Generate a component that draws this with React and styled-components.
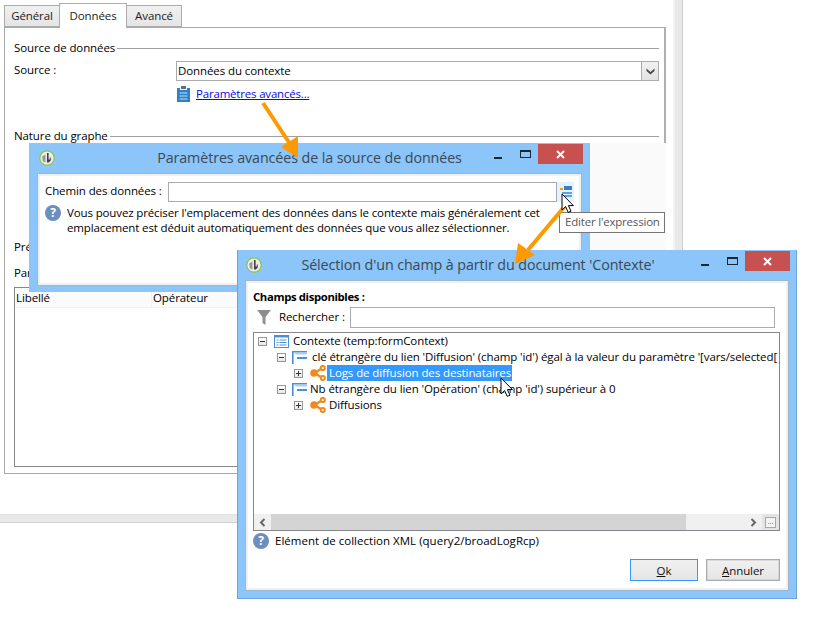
import styled, { createGlobalStyle } from "styled-components";

const FONT = `"Open Sans", "Noto Sans", "Liberation Sans", sans-serif`;

const GlobalStyle = createGlobalStyle`
  html, body {
    margin: 0;
    padding: 0;
    background: #fff;
  }
  body {
    font-family: ${FONT};
    font-size: 11.5px;
    letter-spacing: -0.1px;
    color: #000;
  }
  * { box-sizing: border-box; }
  svg { flex: none; }
`;

const Page = styled.div`
  position: relative;
  width: 823px;
  height: 626px;
  overflow: hidden;
  display: flex;
  align-items: flex-start;
`;

const Editor = styled.div`
  width: 673px;
  display: flex;
  flex-direction: column;
`;

const Tabs = styled.div`
  display: flex;
  align-items: flex-end;
  height: 28px;
  padding: 3px 0 0 4px;
  margin-bottom: -1px;
  position: relative;
  z-index: 1;
`;

const Tab = styled.div`
  width: ${(p) => p.$w}px;
  height: ${(p) => (p.$active ? 25 : 22)}px;
  margin-bottom: ${(p) => (p.$active ? 0 : 1)}px;
  margin-left: ${(p) => (p.$first ? 0 : -1)}px;
  padding-bottom: 2px;
  display: flex;
  align-items: center;
  justify-content: center;
  border: 1px solid #acacac;
  border-bottom: ${(p) => (p.$active ? "none" : "1px solid #acacac")};
  background: ${(p) => (p.$active ? "#fff" : "linear-gradient(#f0f0f0, #e5e5e5)")};
  color: #222;
`;

const Panel = styled.div`
  width: 662px;
  height: 447px;
  margin-left: 4px;
  padding: 12px 5px 0 9px;
  border: 1px solid #a8a8a8;
  border-right: 2px solid #b0b0b0;
  display: flex;
  flex-direction: column;
`;

const Heading = styled.div`
  height: 16px;
  padding-bottom: 2px;
  margin-top: ${(p) => p.$top || 0}px;
  display: flex;
  align-items: center;
  gap: 2px;
  white-space: nowrap;
  &::after {
    content: "";
    flex: 1;
    height: 1px;
    margin-top: 2px;
    background: #a0a0a0;
  }
`;

const SourceRow = styled.div`
  display: flex;
  align-items: center;
  height: 20px;
  margin-top: 5px;
`;

const FieldLabel = styled.div`
  width: ${(p) => p.$w}px;
  flex: none;
  white-space: nowrap;
  margin-bottom: ${(p) => p.$lift * 2}px;
`;

const SelectBox = styled.div`
  flex: 1;
  height: 20px;
  display: flex;
  align-items: center;
  justify-content: space-between;
  border: 1px solid #acacac;
  padding-left: 1px;
`;

const SelectText = styled.span`
  margin-bottom: 2px;
`;

const SelectArrow = styled.div`
  width: 17px;
  height: 18px;
  display: flex;
  align-items: center;
  justify-content: center;
  border-left: 1px solid #acacac;
  background: linear-gradient(#f0f0f0, #e3e3e3);
`;

const LinkRow = styled.div`
  height: 16px;
  margin: 5px 0 0 163px;
  display: flex;
  align-items: center;
  gap: 6px;
`;

const Link = styled.a`
  color: #0a0ae0;
  text-decoration: underline;
  letter-spacing: -0.19px;
  margin-bottom: 2px;
`;

const HiddenLabel = styled.div`
  height: 16px;
  margin-top: ${(p) => p.$top}px;
  line-height: 16px;
`;

const GridBox = styled.div`
  height: 180px;
  margin-top: 6px;
  border: 1px solid #85878c;
`;

const GridHeader = styled.div`
  height: 20px;
  display: flex;
  background: #fbfbfb;
  border-bottom: 1px solid #eaf2fb;
`;

const GridCol = styled.div`
  width: ${(p) => p.$w}px;
  padding-left: 1px;
  display: flex;
  align-items: center;
  border-right: 1px solid #eaf2fb;
`;

const BottomBar = styled.div`
  height: 9px;
  margin-top: 40px;
  background: #e9e9e9;
  border-top: 1px solid #e2e2e2;
  border-bottom: 1px solid #d2d2d2;
`;

const SideBar = styled.div`
  width: 10px;
  height: 520px;
  background: #e9e9e9;
  border-left: 2px solid #f3f3f3;
  border-right: 1px solid #cfcfcf;
`;

const Shade = styled.div`
  position: absolute;
  left: 590px;
  top: 143px;
  width: 76px;
  height: 107px;
  background: #fafafa;
`;

/* windows sit on top of the page, like on a desktop */
const Window = styled.div`
  position: absolute;
  left: ${(p) => p.$x}px;
  top: ${(p) => p.$y}px;
  width: ${(p) => p.$w}px;
  height: ${(p) => p.$h}px;
  background: #8bc5f9;
  border: 1px solid ${(p) => p.$edge};
  border-top: none;
  display: flex;
  flex-direction: column;
  padding: 0 7px ${(p) => p.$bottom}px;
`;

const TitleBar = styled.div`
  position: relative;
  height: 30px;
  flex: none;
  display: flex;
  align-items: center;
  justify-content: center;
  padding: 0 ${(p) => p.$shift}px 2px 0;
  font-size: 14.3px;
  letter-spacing: -0.1px;
  color: #3c4853;
`;

const AppIcon = styled.svg`
  position: absolute;
  left: ${(p) => p.$left}px;
  top: 7px;
`;

const Controls = styled.div`
  position: absolute;
  right: -1px;
  top: 1px;
  display: flex;
  align-items: flex-start;
`;

const MinBtn = styled.div`
  width: 8px;
  height: 2px;
  margin: 13px 18px 0 0;
  background: #1c2630;
`;

const MaxBtn = styled.div`
  width: 11px;
  height: 8px;
  margin: 6px 7px 0 0;
  border: 1px solid #1c2630;
  border-top-width: 2px;
`;

const CloseBtn = styled.div`
  width: 45px;
  height: 20px;
  background: #c75050;
  display: flex;
  align-items: center;
  justify-content: center;
`;

const Body = styled.div`
  flex: 1;
  background: #fff;
  border: 1px solid #9db7cf;
  box-shadow: inset 0 0 0 2px #f0f0f0;
  padding: ${(p) => p.$pad};
  display: flex;
  flex-direction: column;
  min-height: 0;
`;

const PathRow = styled.div`
  display: flex;
  align-items: center;
  height: 20px;
`;

const TextInput = styled.div`
  height: ${(p) => p.$h}px;
  width: ${(p) => p.$w}px;
  border: 1px solid #acacac;
  background: #fff;
`;

const ExprBtn = styled.div`
  width: 17px;
  height: 20px;
  background: #e5f1fb;
  display: flex;
  justify-content: center;
  padding-top: 4px;
`;

const HelpRow = styled.div`
  display: flex;
  align-items: flex-start;
  gap: 6px;
  margin-top: ${(p) => p.$top}px;
  line-height: 15px;
  white-space: nowrap;
  letter-spacing: ${(p) => p.$spacing}px;
`;

const HelpBadge = styled.span`
  width: 16px;
  height: 16px;
  flex: none;
  border-radius: 50%;
  background: #6c8ebf;
  color: #fff;
  font-size: 12px;
  font-weight: 700;
  line-height: 16px;
  text-align: center;
`;

const Tooltip = styled.div`
  position: absolute;
  left: 559px;
  top: 212px;
  width: 106px;
  height: 21px;
  background: #fff;
  border: 1px solid #767676;
  color: #575757;
  font-size: 11.5px;
  letter-spacing: -0.2px;
  display: flex;
  align-items: center;
  padding: 0 0 2px 5px;
  white-space: nowrap;
`;

const BoldLabel = styled.div`
  font-weight: 700;
  height: 16px;
  line-height: 16px;
  font-size: 11.3px;
  letter-spacing: -0.35px;
`;

const SearchRow = styled.div`
  display: flex;
  align-items: center;
  height: 21px;
  margin-top: 2px;
`;

const FilterWrap = styled.div`
  width: 26px;
  padding-left: 4px;
  display: flex;
`;

const TreeBox = styled.div`
  height: 199px;
  margin-top: 4px;
  width: 527px;
  border: 1px solid #85878c;
  display: flex;
  flex-direction: column;
`;

const TreeRows = styled.div`
  flex: 1;
  overflow: hidden;
`;

const TreeRow = styled.div`
  height: 16px;
  display: flex;
  align-items: center;
  white-space: nowrap;
  padding-left: ${(p) => p.$indent}px;
`;

const Expander = styled.span`
  width: 9px;
  height: 9px;
  flex: none;
  position: relative;
  border: 1px solid #979797;
  background: linear-gradient(#fff, #e6e6e6);
  margin-right: ${(p) => p.$gap}px;
  &::before {
    content: "";
    position: absolute;
    left: 1px;
    top: 3px;
    width: 5px;
    height: 1px;
    background: #333;
  }
  &::after {
    content: "";
    display: ${(p) => (p.$open ? "none" : "block")};
    position: absolute;
    left: 3px;
    top: 1px;
    width: 1px;
    height: 5px;
    background: #333;
  }
`;

const NodeText = styled.span`
  margin-left: ${(p) => p.$gap}px;
  padding: 0 1px 0 2px;
  height: 16px;
  line-height: 16px;
  background: ${(p) => (p.$selected ? "#3399ff" : "transparent")};
  color: ${(p) => (p.$selected ? "#fff" : "#000")};
`;

const ScrollBar = styled.div`
  height: 16px;
  flex: none;
  display: flex;
  background: #f0f0f0;
`;

const ScrollEnd = styled.div`
  width: ${(p) => p.$w}px;
  flex: none;
  display: flex;
  align-items: center;
  justify-content: center;
`;

const ScrollThumb = styled.div`
  width: 415px;
  background: #d4d4d4;
`;

const ScrollTrack = styled.div`
  flex: 1;
`;

const Corner = styled.div`
  width: 17px;
  background: #e4e4e4;
  display: flex;
  align-items: center;
  justify-content: center;
`;

const CornerDots = styled.div`
  width: 11px;
  height: 11px;
  border: 1px solid #a8a8a8;
  background: #f3f3f3;
  color: #666;
  font-size: 8px;
  line-height: 5px;
  text-align: center;
`;

const Buttons = styled.div`
  display: flex;
  justify-content: flex-end;
  gap: 8px;
  margin-top: 10px;
  width: 527px;
`;

const Button = styled.div`
  width: ${(p) => p.$w}px;
  height: 22px;
  display: flex;
  align-items: center;
  justify-content: center;
  background: linear-gradient(#f0f0f0, #e5e5e5);
  border: ${(p) => (p.$primary ? "1px solid #3399ff" : "1px solid #acacac")};
  box-shadow: ${(p) => (p.$primary ? "none" : "inset 0 0 0 0.5px #c4c4c4")};
  color: #111;
`;

const Overlay = styled.svg`
  position: absolute;
  left: 0;
  top: 0;
  pointer-events: none;
`;

const Logo = ({ left }) => (
  <AppIcon $left={left} width="16" height="16" viewBox="0 0 16 16">
    <circle cx="8" cy="8" r="7.2" fill="#ececec" stroke="#8dc63f" strokeWidth="1.2" />
    <path d="M3 6.5 L6.5 4.5 V12.5 L4 11.5 Z" fill="#9a9a9a" />
    <path d="M8 3 h1.6 v6.5 h1.2 v-2 h1 v3 l-2 2 h-1.8 Z" fill="#404040" />
  </AppIcon>
);

const CloseX = () => (
  <svg width="9" height="9" viewBox="0 0 9 9">
    <path d="M1 1 L8 8 M8 1 L1 8" stroke="#fff" strokeWidth="2" />
  </svg>
);

const ClipboardIcon = () => (
  <svg width="13" height="16" viewBox="0 0 13 16">
    <path d="M4 0 h5 v3 h-5 Z" fill="#5b6f86" />
    <path d="M0 2 h3 v2 h7 v-2 h3 v14 h-13 Z" fill="#2f80c8" />
    <path d="M2.5 7 h8 M2.5 10 h8 M2.5 13 h8" stroke="#bfe0f7" strokeWidth="1" />
  </svg>
);

const ChevronDown = () => (
  <svg width="9" height="7" viewBox="0 0 9 7">
    <path d="M0.5 0.5 L4.5 4 L8.5 0.5 V3 L4.5 6.5 L0.5 3 Z" fill="#4a4a4a" />
  </svg>
);

const ExprIcon = () => (
  <svg width="12" height="13" viewBox="0 0 12 13">
    <rect x="0" y="2" width="3" height="2" fill="#f39a1e" />
    <rect x="4" y="0" width="8" height="4" fill="#2f80c8" />
    <rect x="2" y="6" width="10" height="2" fill="#5aa2dd" />
    <rect x="2" y="9" width="10" height="2" fill="#5aa2dd" />
  </svg>
);

const FilterIcon = () => (
  <svg width="14" height="15" viewBox="0 0 14 15">
    <path d="M0 0 H14 L8.5 7 V15 L5.5 13 V7 Z" fill="#8f8f8f" />
  </svg>
);

const ListIcon = () => (
  <svg width="15" height="13" viewBox="0 0 15 13">
    <rect x="0.5" y="0.5" width="14" height="12" fill="#fff" stroke="#4a90d9" />
    <rect x="0.5" y="0.5" width="14" height="2" fill="#4a90d9" />
    <path d="M2.5 5 h2 M5.5 5 h7 M2.5 7.5 h2 M5.5 7.5 h7 M2.5 10 h2 M5.5 10 h7" stroke="#4a90d9" />
  </svg>
);

const LinkNodeIcon = () => (
  <svg width="15" height="13" viewBox="0 0 15 13">
    <path d="M0.8 13 V0.8 H15" fill="none" stroke="#4a90d9" strokeWidth="1.6" />
    <path d="M3 2 H15 V3.5 H3 Z" fill="#a8cdf0" />
    <rect x="5" y="6" width="10" height="2" fill="#4a90d9" />
  </svg>
);

const ShareIcon = () => (
  <svg width="16" height="16" viewBox="0 0 16 16">
    <path d="M4.5 8 L12.5 3 M4.5 8 L12.5 13" stroke="#f08c1e" strokeWidth="2.2" />
    <circle cx="4" cy="8" r="3.8" fill="#f08c1e" />
    <circle cx="12.8" cy="3" r="2.1" fill="#fff" stroke="#f08c1e" strokeWidth="2" />
    <circle cx="12.8" cy="13" r="2.1" fill="#fff" stroke="#f08c1e" strokeWidth="2" />
  </svg>
);

const ScrollArrow = ({ d }) => (
  <svg width="7" height="9" viewBox="0 0 7 9">
    <path d={d} fill="none" stroke="#666" strokeWidth="2" />
  </svg>
);

const Cursor = ({ x, y }) => (
  <path
    transform={`translate(${x} ${y})`}
    d="M0 0 V16 L3.6 12.6 L6.2 18.4 L9 17.2 L6.4 11.6 H11.4 Z"
    fill="#fff"
    stroke="#000"
    strokeWidth="1"
    strokeLinejoin="round"
  />
);

const TREE = [
  { indent: 4, open: true, boxGap: 7, Icon: ListIcon, textGap: 2, label: "Contexte (temp:formContext)" },
  {
    indent: 23,
    open: true,
    boxGap: 6,
    Icon: LinkNodeIcon,
    textGap: 3,
    label: "clé étrangère du lien 'Diffusion' (champ 'id') égal à la valeur du paramètre '[vars/selected[",
  },
  { indent: 40, boxGap: 7, Icon: ShareIcon, textGap: 1, label: "Logs de diffusion des destinataires", selected: true },
  {
    indent: 23,
    open: true,
    boxGap: 6,
    Icon: LinkNodeIcon,
    textGap: 1,
    label: "Nb étrangère du lien 'Opération' (champ 'id') supérieur à 0",
  },
  { indent: 40, boxGap: 7, Icon: ShareIcon, textGap: 1, label: "Diffusions" },
];

export default function App() {
  return (
    <Page>
      <GlobalStyle />
      <Editor>
        <Tabs>
          <Tab $w={56} $first>Général</Tab>
          <Tab $w={68} $active>Données</Tab>
          <Tab $w={56}>Avancé</Tab>
        </Tabs>
        <Panel>
          <Heading>Source de données</Heading>
          <SourceRow>
            <FieldLabel $w={162} $lift={2}>Source :</FieldLabel>
            <SelectBox>
              <SelectText>Données du contexte</SelectText>
              <SelectArrow>
                <ChevronDown />
              </SelectArrow>
            </SelectBox>
          </SourceRow>
          <LinkRow>
            <ClipboardIcon />
            <Link>Paramètres avancés...</Link>
          </LinkRow>
          <Heading $top={26}>Nature du graphe</Heading>
          <HiddenLabel $top={95}>Présentation</HiddenLabel>
          <HiddenLabel $top={10}>Paramètres</HiddenLabel>
          <GridBox>
            <GridHeader>
              <GridCol $w={137}>Libellé</GridCol>
              <GridCol $w={200}>Opérateur</GridCol>
            </GridHeader>
          </GridBox>
        </Panel>
        <BottomBar />
      </Editor>
      <SideBar />

      <Shade />

      <Window $x={29} $y={143} $w={561} $h={149} $edge="#8bc5f9" $bottom={5}>
        <TitleBar $shift={0}>
          <Logo left={2} />
          Paramètres avancées de la source de données
          <Controls>
            <MinBtn />
            <MaxBtn />
            <CloseBtn>
              <CloseX />
            </CloseBtn>
          </Controls>
        </TitleBar>
        <Body $pad="8px 7px 0 7px">
          <PathRow>
            <FieldLabel $w={123} $lift={2}>Chemin des données :</FieldLabel>
            <TextInput $w={389} $h={20} />
            <ExprBtn>
              <ExprIcon />
            </ExprBtn>
          </PathRow>
          <HelpRow $top={3} $spacing={-0.13}>
            <HelpBadge>?</HelpBadge>
            <span>
              Vous pouvez préciser l'emplacement des données dans le contexte mais généralement cet
              <br />
              emplacement est déduit automatiquement des données que vous allez sélectionner.
            </span>
          </HelpRow>
        </Body>
      </Window>

      <Tooltip>Editer l'expression</Tooltip>

      <Window $x={237} $y={250} $w={560} $h={349} $edge="#6ea5d6" $bottom={7}>
        <TitleBar $shift={78}>
          <Logo left={1} />
          Sélection d'un champ à partir du document 'Contexte'
          <Controls>
            <MinBtn />
            <MaxBtn />
            <CloseBtn>
              <CloseX />
            </CloseBtn>
          </Controls>
        </TitleBar>
        <Body $pad="8px 7px 0 7px">
          <BoldLabel>Champs disponibles :</BoldLabel>
          <SearchRow>
            <FilterWrap>
              <FilterIcon />
            </FilterWrap>
            <FieldLabel $w={71} $lift={1}>Rechercher :</FieldLabel>
            <TextInput $w={425} $h={21} />
          </SearchRow>
          <TreeBox>
            <TreeRows>
              {TREE.map((row) => (
                <TreeRow key={row.label} $indent={row.indent}>
                  <Expander $open={row.open} $gap={row.boxGap} />
                  <row.Icon />
                  <NodeText $gap={row.textGap} $selected={row.selected}>
                    {row.label}
                  </NodeText>
                </TreeRow>
              ))}
            </TreeRows>
            <ScrollBar>
              <ScrollEnd $w={17}>
                <ScrollArrow d="M5.5 1 L2 4.5 L5.5 8" />
              </ScrollEnd>
              <ScrollThumb />
              <ScrollTrack />
              <ScrollEnd $w={17}>
                <ScrollArrow d="M1.5 1 L5 4.5 L1.5 8" />
              </ScrollEnd>
              <Corner>
                <CornerDots>...</CornerDots>
              </Corner>
            </ScrollBar>
          </TreeBox>
          <HelpRow $top={2} $spacing={0.02}>
            <HelpBadge>?</HelpBadge>
            <span>Elément de collection XML (query2/broadLogRcp)</span>
          </HelpRow>
          <Buttons>
            <Button $w={68} $primary>
              <span>
                <u>O</u>k
              </span>
            </Button>
            <Button $w={74}>
              <span>
                <u>A</u>nnuler
              </span>
            </Button>
          </Buttons>
        </Body>
      </Window>

      <Overlay width="823" height="626" viewBox="0 0 823 626">
        <path d="M263 103 L290 144" stroke="#ff9900" strokeWidth="4" />
        <polygon points="298,158 281,147 298,136" fill="#ff9900" />
        <path d="M565 206 L528 250" stroke="#ff9900" strokeWidth="4" />
        <polygon points="515,264 518,243 535,255" fill="#ff9900" />
        <Cursor x={562} y={194} />
        <Cursor x={501} y={378} />
      </Overlay>
    </Page>
  );
}
